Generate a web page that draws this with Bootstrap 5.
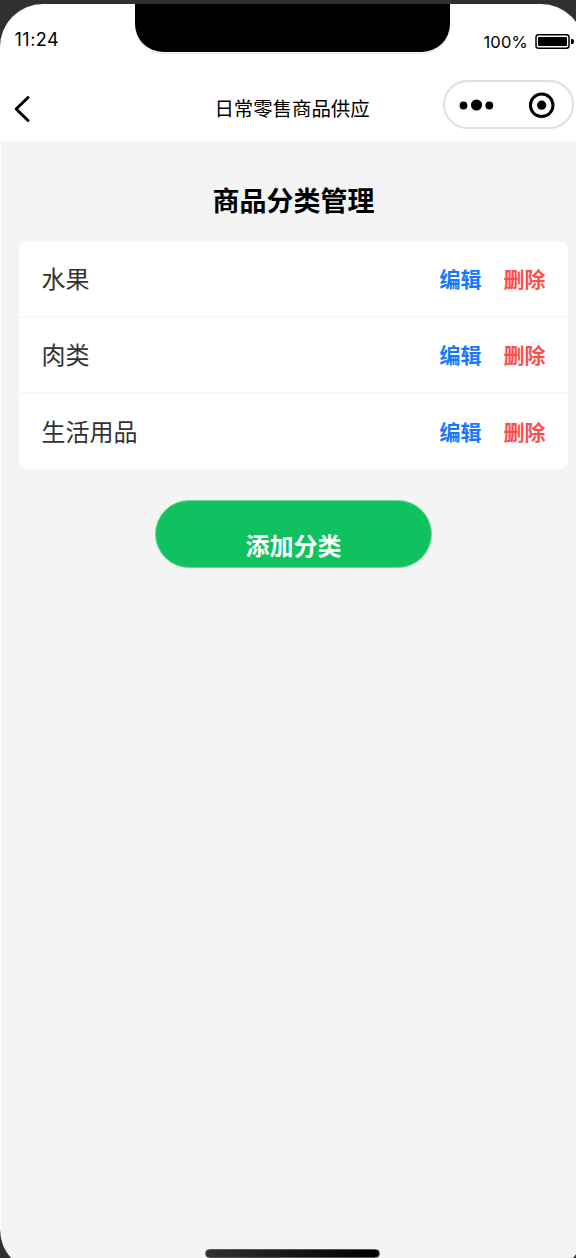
<!DOCTYPE html>
<html lang="zh-CN">
<head>
<meta charset="utf-8">
<meta name="viewport" content="width=device-width, initial-scale=1">
<title>商品分类管理</title>
<link href="https://cdn.jsdelivr.net/npm/bootstrap@5.3.0/dist/css/bootstrap.min.css" rel="stylesheet">
<style>
html,body{height:100%;overflow:hidden}
body{background:#303030;color:#000;font-family:Inter,"Noto Sans CJK SC",sans-serif}
.phone{width:584px;height:1268px;margin-top:4px;border-radius:43px;background:#fff;overflow:hidden}
.top-bar{height:136.5px}
.status{height:72px}
.clock{font-size:18px;letter-spacing:.5px;line-height:24px;padding:24px 0 0 14.5px}
.power{font-size:16.5px;letter-spacing:.2px;line-height:24px;padding:26px 9px 0 0;gap:7px}
.notch{left:134.5px;top:0;width:315px;height:48px;background:#000;border-radius:0 0 28px 28px;box-shadow:0 1px 0 #fff,0 2px 0 #e4e4e4}
.nav-row{height:64px}
.back{left:13px;top:19px}
.app-title{font-size:19.4px;line-height:28px;padding-top:19px}
.capsule{left:443px;top:4px;width:131px;height:49px;border:2px solid #dedede;border-radius:25px}
.screen{background:#f4f4f4;margin-left:1px;height:1140px;padding:0 16px 0 18px}
.page-title{font-size:27px;line-height:40px;padding-top:41px;margin-bottom:19px;font-weight:700}
.categories{width:549px;border-radius:8px;overflow:hidden}
.category{height:76.5px;padding:3px 22.5px 0;border:0;border-bottom:2px solid #f8f8f8;border-radius:0;background:#fff;color:#333;font-size:24px}
.category:first-child{height:77px}
.category:last-child{border-bottom:0;height:75px}
.action{font-size:21px;line-height:30px;font-weight:700;text-decoration:none}
.edit{color:#1677ff;margin-right:22px}
.remove{color:#ff4d4f}
.add{width:277px;height:68px;margin-top:31px;background:#10c160;color:#fff;border:1px solid #70d79b;border-radius:34px;font-size:24px;line-height:30px;font-weight:700;padding:25px 0 0}
.add:hover{background:#0eaf57;color:#fff}
.home-bar{left:205px;top:1245px;width:175px;height:9px;border-radius:5px;border:1px solid #555;background:linear-gradient(90deg,#303030,#000)}
</style>
</head>
<body>
<div class="phone position-relative">
  <header class="top-bar">
    <div class="status d-flex justify-content-between position-relative">
      <div class="clock">11:24</div>
      <div class="notch position-absolute"></div>
      <div class="power d-flex align-items-start">
        <span>100%</span>
        <svg class="mt-1" width="40" height="16" viewBox="0 0 40 16" aria-hidden="true">
          <rect x="1" y=".8" width="33" height="13.4" rx="2.5" fill="none" stroke="#000" stroke-width="1.5"/>
          <rect x="3" y="3" width="29" height="9" rx="1"/>
          <path d="M36 5h1.5q1.5 0 1.5 2.5T37.500 10H36z"/>
        </svg>
      </div>
    </div>
    <div class="nav-row position-relative text-center">
      <svg class="back position-absolute" width="18" height="28" viewBox="0 0 18 28" aria-label="返回"><path d="M15 2.500 3.200 14 15 25.500" fill="none" stroke="#000" stroke-width="3" stroke-linecap="round" stroke-linejoin="round"/></svg>
      <div class="app-title">日常零售商品供应</div>
      <div class="capsule position-absolute">
        <svg class="d-block" width="127" height="45" viewBox="445 82 127 45" aria-hidden="true">
          <circle cx="463.500" cy="105.500" r="3.900"/><circle cx="476.500" cy="105" r="5.600"/><circle cx="489.300" cy="105.500" r="3.900"/>
          <circle cx="541.700" cy="105.200" r="11.300" fill="none" stroke="#000" stroke-width="3"/><circle cx="541.700" cy="105.200" r="4.600"/>
        </svg>
      </div>
    </div>
  </header>
  <main class="screen">
    <h1 class="page-title text-center">商品分类管理</h1>
    <div class="list-group categories">
      <div class="list-group-item category d-flex align-items-center justify-content-between"><span>水果</span><span class="d-flex"><a class="action edit" href="#">编辑</a><a class="action remove" href="#">删除</a></span></div>
      <div class="list-group-item category d-flex align-items-center justify-content-between"><span>肉类</span><span class="d-flex"><a class="action edit" href="#">编辑</a><a class="action remove" href="#">删除</a></span></div>
      <div class="list-group-item category d-flex align-items-center justify-content-between"><span>生活用品</span><span class="d-flex"><a class="action edit" href="#">编辑</a><a class="action remove" href="#">删除</a></span></div>
    </div>
    <div class="text-center"><button type="button" class="btn add">添加分类</button></div>
  </main>
  <div class="home-bar position-absolute"></div>
</div>
<script src="https://cdn.jsdelivr.net/npm/bootstrap@5.3.0/dist/js/bootstrap.bundle.min.js"></script>
</body>
</html>
